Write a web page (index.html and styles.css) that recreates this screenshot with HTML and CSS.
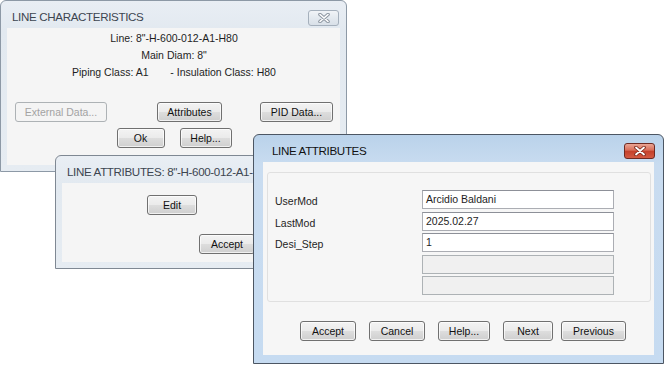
FILE: index.html
```html
<!DOCTYPE html>
<html>
<head>
<meta charset="utf-8">
<link rel="stylesheet" href="styles.css">
</head>
<body>
<div class="desk">

  <div class="win win-chars inactive">
    <div class="titlebar">
      <span class="title">LINE CHARACTERISTICS</span>
      <span class="close close-off">
        <svg width="12" height="10" viewBox="0 0 12 10"><path d="M2 1.5 L10 8.5 M10 1.5 L2 8.5" stroke="#8e97a2" stroke-width="3.6" stroke-linecap="round"/><path d="M2 1.5 L10 8.5 M10 1.5 L2 8.5" stroke="#ffffff" stroke-width="1.6" stroke-linecap="round"/></svg>
      </span>
    </div>
    <div class="client chars-client">
      <div class="info">Line: 8"-H-600-012-A1-H80</div>
      <div class="info">Main Diam: 8"</div>
      <div class="info">Piping Class: A1 <span class="sp"></span> - Insulation Class: H80</div>
      <div class="btnrow row1">
        <button class="btn disabled w-ext">External Data...</button>
        <button class="btn w-attr">Attributes</button>
        <button class="btn w-pid">PID Data...</button>
      </div>
      <div class="btnrow row2">
        <button class="btn w-ok">Ok</button>
        <button class="btn w-help">Help...</button>
      </div>
    </div>
  </div>

  <div class="win win-list inactive">
    <div class="titlebar">
      <span class="title">LINE ATTRIBUTES: 8"-H-600-012-A1-H80</span>
    </div>
    <div class="client list-client">
      <button class="btn w-edit">Edit</button>
      <button class="btn w-accept2">Accept</button>
    </div>
  </div>

  <div class="win win-attr active">
    <div class="titlebar">
      <span class="title">LINE ATTRIBUTES</span>
      <span class="close close-red">
        <svg width="12" height="10" viewBox="0 0 12 10"><path d="M2 1.5 L10 8.5 M10 1.5 L2 8.5" stroke="#7a2a1e" stroke-width="3.6" stroke-linecap="round"/><path d="M2 1.5 L10 8.5 M10 1.5 L2 8.5" stroke="#ffffff" stroke-width="1.8" stroke-linecap="round"/></svg>
      </span>
    </div>
    <div class="client attr-client">
      <div class="panel">
        <div class="frow"><span class="lbl">UserMod</span><span class="field">Arcidio Baldani</span></div>
        <div class="frow"><span class="lbl">LastMod</span><span class="field">2025.02.27</span></div>
        <div class="frow"><span class="lbl">Desi_Step</span><span class="field">1</span></div>
        <div class="frow"><span class="lbl"></span><span class="field off"></span></div>
        <div class="frow"><span class="lbl"></span><span class="field off"></span></div>
      </div>
      <div class="btnrow row3">
        <button class="btn w-accept">Accept</button>
        <button class="btn w-cancel">Cancel</button>
        <button class="btn w-help2">Help...</button>
        <button class="btn w-next">Next</button>
        <button class="btn w-prev">Previous</button>
      </div>
    </div>
  </div>

</div>
</body>
</html>
```

FILE: styles.css
```css
html, body {
  margin: 0;
  padding: 0;
  background: #ffffff;
}
body {
  font-family: "Liberation Sans", Arial, sans-serif;
  font-size: 10.5px;
  color: #1e1e1e;
}
.desk {
  position: relative;
  width: 664px;
  height: 365px;
  overflow: hidden;
}
.win {
  position: absolute;
  box-sizing: border-box;
  border: 1px solid #8d99a6;
  border-radius: 6px 6px 0 0;
  display: flex;
  flex-direction: column;
  overflow: hidden;
}
.inactive {
  background: linear-gradient(#e9eef4, #e2e9f0 30px, #e6ecf2);
}
.active {
  border-color: #4c5663;
  background: linear-gradient(#bad2ea, #c9dcf0 30px, #c6dbf1);
}
.titlebar {
  height: 27px;
  flex: none;
  display: flex;
  align-items: center;
  position: relative;
}
.title {
  font-size: 11.6px;
  letter-spacing: -0.35px;
  color: #3c4550;
  white-space: nowrap;
  padding-top: 3px;
}
.active .title {
  color: #111;
}
.close {
  position: absolute;
  box-sizing: border-box;
  width: 31px;
  height: 16px;
  border-radius: 3px;
  display: flex;
  align-items: center;
  justify-content: center;
}
.close-off {
  border: 1px solid #a5b0bc;
  background: linear-gradient(#f1f4f7, #e3e9ef 50%, #d9e0e8);
}
.close-red {
  border: 1px solid #6e2a22;
  background: linear-gradient(#eaa594, #d86d58 45%, #c4402a 50%, #d35a43);
}
.client {
  flex: 1;
  background: #f5f5f5;
  box-sizing: border-box;
}
.btn {
  box-sizing: border-box;
  height: 20px;
  font-family: "Liberation Sans", Arial, sans-serif;
  font-size: 10.5px;
  color: #111;
  border: 1px solid #707070;
  border-radius: 3px;
  background: linear-gradient(#f3f3f3, #ebebeb 48%, #dddddd 52%, #cfcfcf);
  padding: 0;
  margin: 0;
  box-shadow: inset 0 0 0 1px rgba(255,255,255,0.7);
}
.btn.disabled {
  color: #a3a3a3;
  border-color: #adb2b5;
  background: #f4f4f4;
  box-shadow: none;
}
.btnrow {
  display: flex;
}

/* window 1 */
.win-chars {
  left: 0;
  top: 0;
  width: 347px;
  height: 172px;
  padding: 0 6px 6px 6px;
}
.win-chars .title {
  padding-left: 5px;
}
.win-chars .close {
  left: 301px;
  top: 9px;
}
.chars-client {
  padding: 2px 7px 0 8px;
}
.info {
  text-align: center;
  line-height: 17px;
  white-space: nowrap;
}
.sp {
  display: inline-block;
  width: 16px;
}
.row1 {
  margin-top: 21px;
}
.row2 {
  margin-top: 6px;
  justify-content: center;
  gap: 15px;
}
.w-ext { width: 92px; }
.w-attr { width: 65px; margin-left: 50px; }
.w-pid { width: 73px; margin-left: 38px; }
.w-ok { width: 48px; }
.w-help { width: 52px; }

/* window 2 */
.win-list {
  left: 55px;
  top: 155px;
  width: 236px;
  height: 114px;
  padding: 0 6px 6px 6px;
  border-color: #7f8893;
}
.win-list .title {
  padding-left: 5px;
}
.list-client {
  display: flex;
  flex-direction: column;
  padding-top: 12px;
}
.w-edit {
  width: 50px;
  margin-left: 85px;
}
.w-accept2 {
  width: 56px;
  margin-top: 19px;
  margin-left: 137px;
}

/* window 3 */
.win-attr {
  left: 253px;
  top: 134px;
  width: 411px;
  height: 230px;
  padding: 0 9px 8px 9px;
}
.win-attr .title {
  padding-left: 9px;
}
.win-attr .close {
  left: 361px;
  top: 8px;
}
.attr-client {
  padding: 10px 3px 0 4px;
  background: #f6f6f6;
}
.panel {
  box-sizing: border-box;
  height: 130px;
  border: 1px solid #e0e0e0;
  border-radius: 3px;
  padding: 17px 0 0 7px;
  display: flex;
  flex-direction: column;
  gap: 2.5px;
}
.frow {
  display: flex;
  align-items: center;
  height: 19px;
}
.lbl {
  width: 147px;
  flex: none;
  padding-top: 3px;
}
.field {
  box-sizing: border-box;
  width: 192px;
  height: 19px;
  background: #ffffff;
  border: 1px solid #abadb3;
  border-top-color: #8d9098;
  padding: 1px 0 0 3px;
  line-height: 15px;
  white-space: nowrap;
}
.field.off {
  background: #f0f0f0;
  border-color: #adb2b5;
}
.row3 {
  margin-top: 19px;
  padding-left: 33px;
}
.w-accept { width: 56px; }
.w-cancel { width: 56px; margin-left: 13px; }
.w-help2 { width: 52px; margin-left: 13px; }
.w-next { width: 50px; margin-left: 13px; }
.w-prev { width: 65px; margin-left: 8px; }
```
